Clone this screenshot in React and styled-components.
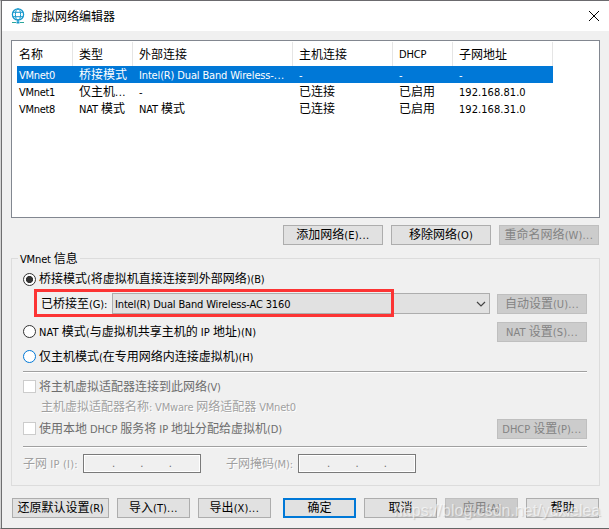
import styled, { createGlobalStyle, css } from 'styled-components'

const GlobalStyle = createGlobalStyle`
    * {
        box-sizing: border-box;
    }
    body {
        margin: 0;
        overflow: hidden;
        background: #f0f0f0;
    }
`

const Window = styled.div`
    width: 609px;
    height: 529px;
    background: #f0f0f0;
    border-top: 1px solid #6b6a6e;
    border-bottom: 1px solid #646464;
    border-left: 1px solid #d4d4d4;
    box-shadow: inset 1px 0 0 #6e6e70;
    padding-left: 1px;
    font-family: 'DejaVu Sans Condensed', 'Noto Sans CJK SC', sans-serif;
    font-size: 11px;
    line-height: 17px;
    color: #000;
    white-space: nowrap;
    position: relative;
`
const TitleBar = styled.div`
    height: 30px;
    background: #fff;
    display: flex;
    align-items: center;
    padding: 0 9px;

    .close {
        margin-left: auto;
    }
`
const Title = styled.h1`
    margin: 0 0 0 6px;
    padding-top: 2px;
    font-size: 12px;
    font-weight: normal;
`
const Content = styled.div`
    padding: 9px 9px 0;
`
const Run = styled.span`
    font-size: 12px;
    letter-spacing: 0;
`
const Ellipsis = styled.span`
    letter-spacing: 0.5px;
`
const Label = styled.span`
    letter-spacing: ${p => p.$ls ?? -0.15}px;
    color: ${p => p.$color || 'inherit'};
    text-shadow: ${p => p.$emboss ? '1px 1px 0 #fff' : 'none'};
`
const ListBox = styled.div`
    height: 178px;
    background: #fff;
    border: 1px solid #828790;
    padding: 1px 5px;
`
const columns = css`
    display: grid;
    width: 536px;
    grid-template-columns: 56px 60px 160px 100px 60px 100px;
`
const ListHeader = styled.div`
    ${columns}
    height: 24px;
    line-height: 26px;

    span.cell {
        height: 24px;
        padding-left: 6px;
        border-right: 1px solid #e5e5e5;
    }
    span.cell:first-child {
        padding-left: 2px;
    }
`
const ListRow = styled.div`
    ${columns}
    height: 17px;
    line-height: 19px;
    background: ${p => p.$selected ? '#0078d7' : 'transparent'};
    color: ${p => p.$selected ? '#fff' : '#000'};

    span.cell {
        padding-left: 6px;
    }
    span.cell:first-child {
        padding-left: 2px;
    }
`
const ButtonRow = styled.div`
    display: flex;
    justify-content: flex-end;
    gap: 8px;
    padding: 7px 1px 0 0;
`
const Button = styled.button`
    flex: none;
    width: ${p => p.$width}px;
    height: 20px;
    padding: 0;
    margin-left: ${p => p.$push ? 'auto' : (p.$left || 0) + 'px'};
    display: flex;
    align-items: center;
    justify-content: center;
    font: inherit;
    line-height: 16px;
    color: #000;
    background: #e1e1e1;
    border: 1px solid #adadad;
    ${p => p.$primary && 'border: 2px solid #0078d7;'}

    &:disabled {
        color: #838383;
        background: #ccc;
        border-color: #bfbfbf;
    }
`
const Group = styled.fieldset`
    height: 236px;
    margin: 5px 0 0;
    min-width: 0;
    padding: 0 12px 0 11px;
    border: 1px solid #dcdcdc;

    legend {
        height: 17px;
        line-height: 19px;
        padding: 0 2px;
        margin-left: -5px;
    }
`
const Line = styled.div`
    display: flex;
    align-items: center;
    height: ${p => p.$h}px;
    padding-left: ${p => p.$indent || 0}px;

    ${Label} {
        padding-top: ${p => p.$drop ?? 2}px;
    }
`
const Radio = styled.span`
    flex: none;
    width: 13px;
    height: 13px;
    margin-right: 3px;
    border-radius: 50%;
    border: 1px solid ${p => p.$hot ? '#0078d7' : '#333'};
    background: ${p => p.$checked ? 'radial-gradient(circle, #333 3.2px, #fff 3.9px)' : '#fff'};
`
const Check = styled.span`
    flex: none;
    width: 13px;
    height: 13px;
    margin-right: 3px;
    border: 1px solid #ccc;
    background: #fff;
`
const Highlight = styled.div`
    position: absolute;
    left: 33px;
    top: 288px;
    width: 360px;
    height: 28px;
    border: 3px solid #fc3434;
`
const Select = styled.div`
    width: 378px;
    height: 21px;
    margin: 0 7px 1px auto;
    padding: 0 3px 0 2px;
    display: flex;
    align-items: center;
    justify-content: space-between;
    border: 1px solid #adadad;
    background: #e1e1e1;
`
const Divider = styled.div`
    height: 2px;
    margin-top: ${p => p.$top}px;
    background: #fff;
    border-top: 1px solid #a0a0a0;
`
const AddressField = styled.div`
    width: 118px;
    height: 19px;
    margin-right: ${p => p.$gap || 0}px;
    margin-left: auto;
    padding: 0 28px;
    display: flex;
    justify-content: space-between;
    border: 1px solid #7a7a7a;
    box-shadow: inset 0 0 0 1px #fff;
    color: #6d6d6d;
    line-height: 17px;
`
const Footer = styled.div`
    display: flex;
    gap: 8px;
    padding: 12px 0 0 1px;
`
const Watermark = styled.div`
    position: absolute;
    left: 393px;
    top: 500px;
    font: 16px/20px 'Liberation Sans', sans-serif;
    color: rgba(255, 255, 255, 0.6);
    text-shadow: 1px 1px 1px rgba(120, 120, 120, 0.3);
`

// CJK runs are one pixel larger than the latin text around them
const Text = ({ children, ...rest }) => (
    <Label {...rest}>
        {children.split(/([\u4e00-\u9fff]+|\.{3})/).map((part, i) => {
            if (part === '...') return <Ellipsis key={i}>{part}</Ellipsis>
            return i % 2 ? <Run key={i}>{part}</Run> : part
        })}
    </Label>
)

const GlobeIcon = () => (
    <svg width="14" height="16" viewBox="0 0 14 16" fill="none" stroke="#1597cc">
        <circle cx="7" cy="6.5" r="5.6" strokeWidth="1.3" />
        <ellipse cx="7" cy="6.5" rx="2.6" ry="5.6" />
        <path d="M1.8 4.3h10.4M1.8 8.7h10.4M7 12v2" />
        <path d="M1 14.5h4M9 14.5h4" stroke="#2aa79b" />
        <path d="M5.5 14.5h3" strokeWidth="2" />
    </svg>
)

const headers = ['名称', '类型', '外部连接', '主机连接', 'DHCP', '子网地址']
const rows = [
    ['VMnet0', '桥接模式', 'Intel(R) Dual Band Wireless-...', '-', '-', '-'],
    ['VMnet1', '仅主机...', '-', '已连接', '已启用', '192.168.81.0'],
    ['VMnet8', 'NAT 模式', 'NAT 模式', '已连接', '已启用', '192.168.31.0'],
]

const Dots = ({ gap }) => (
    <AddressField $gap={gap}>
        <span>.</span><span>.</span><span>.</span>
    </AddressField>
)

const App = () => {
    return (
        <>
            <GlobalStyle />
            <Window>
                <TitleBar>
                    <GlobeIcon />
                    <Title>虚拟网络编辑器</Title>
                    <svg className="close" width="12" height="12" viewBox="0 0 12 12" stroke="#000">
                        <path d="M1 1l10 10M11 1L1 11" />
                    </svg>
                </TitleBar>
                <Content>
                    <ListBox>
                        <ListHeader>
                            {headers.map(h => <span className="cell" key={h}><Text>{h}</Text></span>)}
                        </ListHeader>
                        {rows.map((row, i) => (
                            <ListRow key={row[0]} $selected={i === 0}>
                                {row.map((cell, j) => (
                                    <span className="cell" key={j}>
                                        <Text $ls={j === 0 ? -0.3 : j === 5 ? 0.05 : undefined}>{cell}</Text>
                                    </span>
                                ))}
                            </ListRow>
                        ))}
                    </ListBox>
                    <ButtonRow>
                        <Button $width={100}><Text $ls={0.2}>添加网络(E)...</Text></Button>
                        <Button $width={100}><Text $ls={0.2}>移除网络(O)</Text></Button>
                        <Button $width={100} disabled><Text $ls={0.1}>重命名网络(W)...</Text></Button>
                    </ButtonRow>
                    <Group>
                        <legend><Text>VMnet 信息</Text></legend>
                        <Line $h={24} $drop={0}>
                            <Radio $checked />
                            <Text>桥接模式(将虚拟机直接连接到外部网络)(B)</Text>
                        </Line>
                        <Line $h={26} $indent={18} $drop={1}>
                            <Text>已桥接至(G):</Text>
                            <Select>
                                <Text>Intel(R) Dual Band Wireless-AC 3160</Text>
                                <svg width="10" height="6" viewBox="0 0 10 6" fill="none" stroke="#444" strokeWidth="1.2">
                                    <path d="M1 1l4 4 4-4" />
                                </svg>
                            </Select>
                            <Button $width={90} disabled><Text $ls={0.1}>自动设置(U)...</Text></Button>
                        </Line>
                        <Line $h={29} $drop={1}>
                            <Radio />
                            <Text $ls={0.05}>NAT 模式(与虚拟机共享主机的 IP 地址)(N)</Text>
                            <Button $width={90} $push disabled><Text $ls={0.1}>NAT 设置(S)...</Text></Button>
                        </Line>
                        <Line $h={21}>
                            <Radio $hot />
                            <Text>仅主机模式(在专用网络内连接虚拟机)(H)</Text>
                        </Line>
                        <Divider $top={4} />
                        <Line $h={27}>
                            <Check />
                            <Text $color="#6d6d6d" $ls={-0.3}>将主机虚拟适配器连接到此网络(V)</Text>
                        </Line>
                        <Line $h={12} $indent={18}>
                            <Text $color="#a0a0a0" $ls={-0.2} $emboss>主机虚拟适配器名称: VMware 网络适配器 VMnet0</Text>
                        </Line>
                        <Line $h={33}>
                            <Check />
                            <Text $color="#6d6d6d">使用本地 DHCP 服务将 IP 地址分配给虚拟机(D)</Text>
                            <Button $width={90} $push disabled><Text $ls={-0.05}>DHCP 设置(P)...</Text></Button>
                        </Line>
                        <Divider $top={1} />
                        <Line $h={31}>
                            <Text $color="#a0a0a0" $ls={0.2} $emboss>子网 IP (I):</Text>
                            <Dots gap={25} />
                            <Text $color="#a0a0a0" $emboss>子网掩码(M):</Text>
                            <Dots gap={171} />
                        </Line>
                    </Group>
                    <Footer>
                        <Button $width={97}><Text>还原默认设置(R)</Text></Button>
                        <Button $width={73}><Text $ls={0.1}>导入(T)...</Text></Button>
                        <Button $width={73}><Text $ls={0.1}>导出(X)...</Text></Button>
                        <Button $width={73} $left={4} $primary><Text>确定</Text></Button>
                        <Button $width={73}><Text>取消</Text></Button>
                        <Button $width={73} disabled><Text>应用(A)</Text></Button>
                        <Button $width={73}><Text>帮助</Text></Button>
                    </Footer>
                </Content>
                <Highlight />
                <Watermark>https://blog.csdn.net/yuxielea</Watermark>
            </Window>
        </>
    )
}
export default App
